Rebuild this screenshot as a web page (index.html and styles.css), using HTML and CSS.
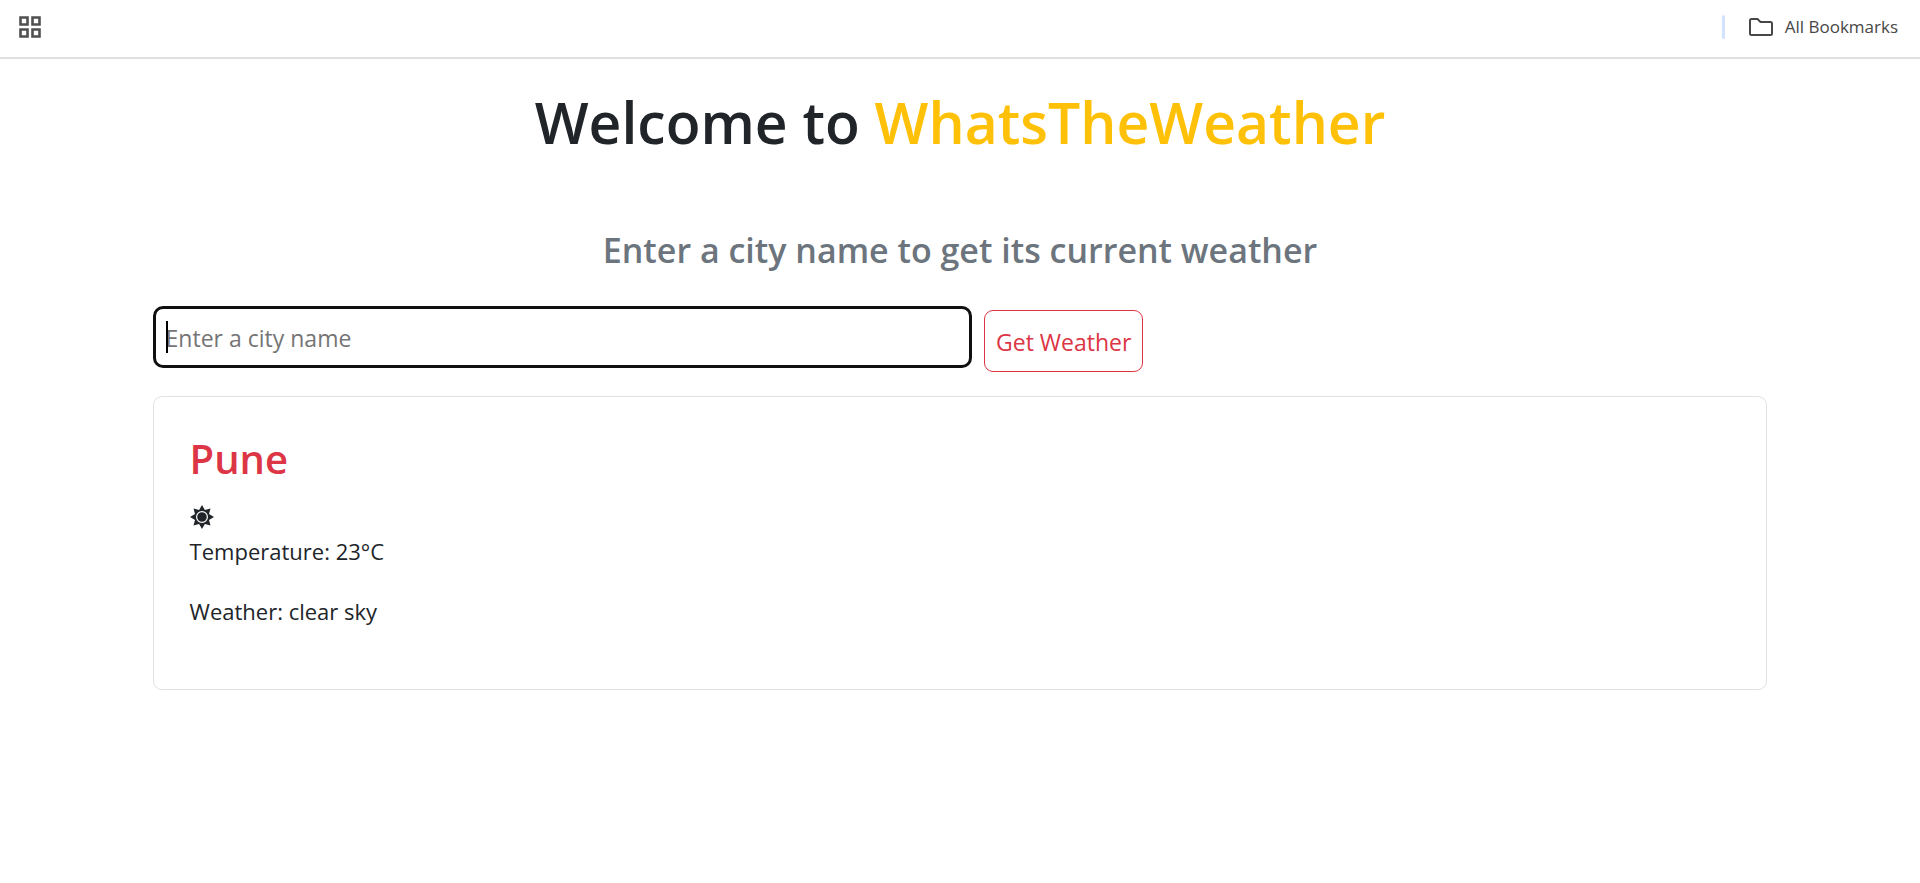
FILE: index.html
```html
<!DOCTYPE html>
<html lang="en">
<head>
<meta charset="utf-8">
<meta name="viewport" content="width=device-width, initial-scale=1">
<title>WhatsTheWeather</title>
<link rel="stylesheet" href="styles.css">
</head>
<body>
<header class="bookmarks-bar">
  <button class="bar-button" type="button" aria-label="Apps">
    <svg class="apps-icon" viewBox="0 0 22 22" fill="none" stroke="#505050" stroke-width="2.600" aria-hidden="true">
      <path d="M1.5 1.5h7v7h-7zM13.5 1.5h7v7h-7zM1.5 13.5h7v7h-7zM13.5 13.5h7v7h-7z"/>
    </svg>
  </button>
  <div class="bar-end">
    <span class="bar-divider"></span>
    <button class="bar-button" type="button">
      <svg class="folder-icon" viewBox="0 0 24 18" fill="none" stroke="#474747" stroke-width="2" stroke-linejoin="round" aria-hidden="true">
        <path d="M2.5 1H8.500L11.500 4H21.500Q23 4 23 5.500V15.500Q23 17 21.500 17H2.500Q1 17 1 15.500V2.500Q1 1 2.500 1Z"/>
      </svg>
      All Bookmarks
    </button>
  </div>
</header>
<main class="page">
  <h1 class="title">Welcome to <span class="brand">WhatsTheWeather</span></h1>
  <h2 class="subtitle">Enter a city name to get its current weather</h2>
  <form class="search">
    <div class="city-field">
      <input class="city-input" type="text" placeholder="Enter a city name" aria-label="City name">
    </div>
    <button class="submit" type="button">Get Weather</button>
  </form>
  <section class="card">
    <h2 class="city">Pune</h2>
    <svg class="sun-icon" viewBox="0 0 24 24" aria-hidden="true">
      <path fill="#212529" d="M12 0L14.900 5 20.500 3.500 19 9.100 24 12 19 14.900 20.500 20.500 14.900 19 12 24 9.100 19 3.500 20.500 5 14.900 0 12 5 9.100 3.500 3.500 9.100 5Z"/>
      <circle cx="12" cy="12" r="5.400" fill="#212529" stroke="#fff" stroke-width="1.200"/>
    </svg>
    <p class="reading">Temperature: 23°C</p>
    <p class="reading">Weather: clear sky</p>
  </section>
</main>
</body>
</html>
```
FILE: styles.css
```css
* {
  box-sizing: border-box;
}

body {
  margin: 0;
  background: #fff;
  color: #212529;
  font: 22px/36px "Segoe UI", "Open Sans", "Noto Sans", sans-serif;
}

button,
input {
  font: inherit;
}

.bookmarks-bar {
  display: flex;
  align-items: center;
  justify-content: space-between;
  height: 59px;
  padding: 0 22px 3px 19px;
  border-bottom: 2px solid #dfe1e0;
}

.bar-button {
  display: flex;
  align-items: center;
  gap: 12px;
  padding: 0;
  border: 0;
  background: none;
  color: #474747;
  font-size: 17px;
  line-height: 24px;
}

.apps-icon {
  width: 22px;
  height: 22px;
}

.folder-icon {
  width: 24px;
  height: 18px;
}

.bar-end {
  display: flex;
  align-items: center;
  gap: 24px;
}

.bar-divider {
  width: 3px;
  height: 24px;
  border-radius: 2px;
  background: #d3e3fd;
}

.page {
  padding: 27px calc(8% - 1px) 48px;
}

.title {
  margin: 0 0 70px;
  font-size: 57px;
  font-weight: 600;
  line-height: 72px;
  text-align: center;
}

.brand {
  color: #ffc107;
}

.subtitle {
  margin: 0 0 34px;
  color: #6c757d;
  font-size: 34px;
  font-weight: 600;
  line-height: 44px;
  text-align: center;
}

.search {
  display: flex;
  align-items: flex-start;
  gap: 12px;
  margin-bottom: 24px;
  font-size: 23px;
}

.city-field {
  position: relative;
  width: calc(50% + 12px);
}

/* text caret of the focused field */
.city-field::after {
  content: "";
  position: absolute;
  top: 15px;
  left: 13px;
  width: 2px;
  height: 32px;
  background: #000;
}

.city-input {
  display: block;
  width: 100%;
  height: 62px;
  padding: 2px 10px 0;
  border: 3px solid #101010;
  border-radius: 10px;
  outline: 0;
  color: #212529;
}

.city-input::placeholder {
  color: #757575;
  opacity: 1;
}

.submit {
  height: 62px;
  margin-top: 4px;
  padding: 2px 11px 0;
  border: 1px solid #dc3545;
  border-radius: 9px;
  background: #fff;
  color: #dc3545;
}

.card {
  padding: 36px;
  border: 1px solid #dee2e6;
  border-radius: 9px;
}

.city {
  margin: 0 0 20px;
  color: #dc3545;
  font-size: 40px;
  font-weight: 600;
  line-height: 52px;
}

.sun-icon {
  display: block;
  width: 24px;
  height: 24px;
  margin-bottom: 4px;
}

.reading {
  margin: 0 0 24px;
}
```
